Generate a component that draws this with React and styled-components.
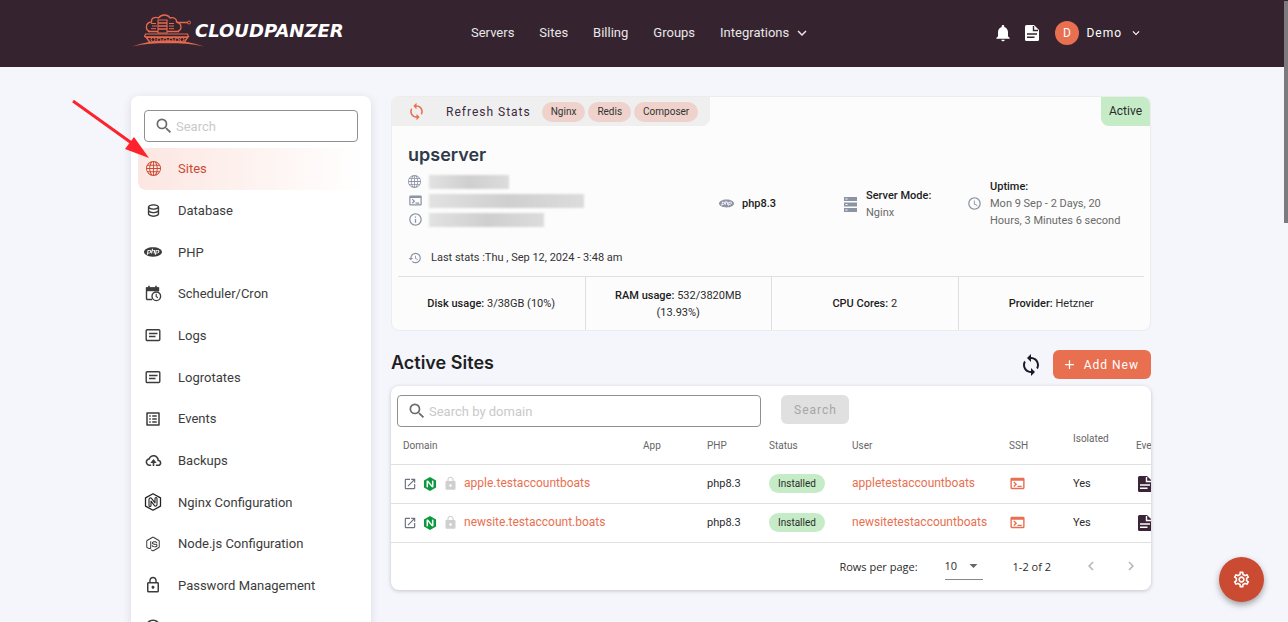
import React from 'react';
import styled, { createGlobalStyle } from 'styled-components';
import {
    MdAccessTime,
    MdAdd,
    MdArrowDropDown,
    MdChevronLeft,
    MdChevronRight,
    MdHistory,
    MdInfoOutline,
    MdKeyboardArrowDown,
    MdLock,
    MdLockOutline,
    MdNotifications,
    MdOpenInNew,
    MdOutlineListAlt,
    MdOutlineSettings,
    MdSearch,
    MdSync,
    MdTerminal,
} from 'react-icons/md';
import { BiCloudUpload, BiData } from 'react-icons/bi';
import { BsGlobe } from 'react-icons/bs';
import { LiaNodeJs } from 'react-icons/lia';
import { SiNginx, SiPhp } from 'react-icons/si';

const GlobalStyle = createGlobalStyle`
    * {
        box-sizing: border-box;
    }

    body {
        margin: 0;
        background-color: #f5f6fb;
        color: #2b2b2b;
        font-family: Roboto, "Liberation Sans", sans-serif;
        font-size: 11px;
        line-height: 17px;
    }

    button, input, select {
        font-family: inherit;
    }

    a {
        text-decoration: none;
    }

    svg {
        display: block;
        flex-shrink: 0;
    }
`;

/* Icons */

const DocumentIcon = ({ size = 18, fold = '#35242f' }) => (
    <svg width={size} height={size} viewBox="0 0 18 18" aria-hidden="true">
        <path d="M3.5 1h7.5L16 6v9.500a1.500 1.500 0 0 1-1.500 1.500h-11A1.500 1.500 0 0 1 2 15.500v-13A1.500 1.500 0 0 1 3.500 1z" fill="currentColor" />
        <path d="M10.500 2v4.500H15" fill="none" stroke={fold} strokeWidth="1.400" />
        <path d="M4 10h10M4 13.300h7.500" stroke={fold} strokeWidth="1.500" />
    </svg>
);

const CalendarClockIcon = () => (
    <svg width="17" height="17" viewBox="0 0 17 17" fill="none" stroke="currentColor" aria-hidden="true">
        <path d="M7 14.500H2.200a.7.7 0 0 1-.7-.7V3.200h12v3" strokeWidth="1.400" />
        <path d="M1 2.200h13v4H1z" fill="currentColor" stroke="none" />
        <path d="M4 .7v2M11 .7v2" strokeWidth="1.600" />
        <circle cx="11.300" cy="11.300" r="4.300" strokeWidth="1.400" />
        <path d="M11.200 8.800v2.700l1.700 1.300" strokeWidth="1.100" />
    </svg>
);

const ArticleIcon = () => (
    <svg width="16" height="16" viewBox="0 0 16 16" fill="none" stroke="currentColor" aria-hidden="true">
        <rect x="1.200" y="2.700" width="13.600" height="10.800" rx="1" strokeWidth="1.400" />
        <path d="M4 6.500h8.500M4 9.500h6.500" strokeWidth="1.300" />
    </svg>
);

const NginxOutlineIcon = () => (
    <svg width="18" height="18" viewBox="0 0 18 18" fill="none" stroke="#222" strokeLinejoin="round" aria-hidden="true">
        <path d="M9 .8l7.500 4.100v8.200L9 17.200l-7.500-4.100V4.900z" strokeWidth="1.300" />
        <path d="M5 12.500V6.200a1.400 1.400 0 0 1 2.500-.8l3.500 4.400V5.500a1 1 0 0 1 2 0v6.300a1.400 1.400 0 0 1-2.500.8L7 8.200v4.300a1 1 0 0 1-2 0z" strokeWidth="1.100" />
    </svg>
);

const ServerIcon = () => (
    <svg width="14" height="16" viewBox="0 0 14 16" aria-hidden="true">
        <path d="M0 1h13v4H0zM0 6.500h13v4H0zM0 12h13v4H0z" fill="#8c93a5" />
        <path d="M1.500 3h2M1.500 8.500h2M1.500 14h2" stroke="#fff" strokeWidth="1.200" />
    </svg>
);

const TankLogo = () => (
    <svg width="74" height="34" viewBox="0 0 74 34" fill="none" stroke="#e5694d" aria-hidden="true">
        <path d="M1 32.500Q37 20 73 32.500Q37 25 1 32.500z" fill="#e5694d" stroke="none" />
        <path d="M19 17.500c-5-1-5-9 1.500-9.500C20 4 24 2.500 27.500 4c3-4 9-4 11.500 0 4-1 7 1 6.500 4 5.500 1 6 8 1 9.500" strokeWidth="1.300" />
        <path d="M17 17.500h10M36 17.500h12" strokeWidth="1.300" />
        <path d="M27 6h9v13h-9z" strokeWidth="1.100" />
        <path d="M27 9h9M27 12h9M27 15h9" strokeWidth="1.300" />
        <path d="M20 9.500h5M21 12h5M20 14.700h5M38 9.500h5M38 12h5M38 14.700h5" strokeWidth="1" />
        <path d="M46 8.500h11" strokeWidth="1.500" />
        <circle cx="58" cy="8.500" r="1.500" strokeWidth="1" />
        <path d="M14.500 20h42l1 2.500-2 1h-40l-2-1z" strokeWidth="1.200" />
        <path d="M15 23l4 5.500h34l4-5.500z" strokeWidth="1.400" />
        <circle cx="22" cy="25.500" r="2" />
        <circle cx="28" cy="26" r="2" />
        <circle cx="34" cy="26" r="2" />
        <circle cx="40" cy="26" r="2" />
        <circle cx="46" cy="26" r="2" />
        <circle cx="51" cy="25.500" r="2" />
    </svg>
);

/* Header */

const Header = styled.header`
    display: flex;
    justify-content: center;
    height: 67px;
    padding: 0 6px 2px 0;
    background-color: #35242f;
    color: #fff;
`;

const HeaderInner = styled.div`
    display: grid;
    grid-template-columns: 340px 1fr auto;
    align-items: center;
    width: 100%;
    max-width: 1020px;
    padding-right: 8px;
`;

const Brand = styled.a`
    display: flex;
    align-items: center;
    padding-bottom: 4px;
    color: #fff;
    font-family: "DejaVu Sans", sans-serif;
    font-size: 18px;
    font-style: italic;
    font-weight: 700;
`;

const BrandName = styled.span`
    margin-left: -10px;
`;

const Nav = styled.nav`
    display: flex;
    align-items: center;
    gap: 25px;
`;

const NavLink = styled.a`
    display: flex;
    align-items: center;
    gap: 4px;
    color: #e9e6e8;
    font-size: 13px;
`;

const HeaderTools = styled.div`
    display: flex;
    align-items: center;
    gap: 10px;
`;

const ToolButton = styled.button`
    padding: 0;
    border: 0;
    background: none;
    color: #fff;
    cursor: pointer;
`;

const AccountButton = styled(ToolButton)`
    display: flex;
    align-items: center;
    gap: 7px;
    padding-left: 4px;
    font-size: 12px;
    letter-spacing: 1px;
`;

const Avatar = styled.span`
    width: 24px;
    height: 24px;
    border-radius: 50%;
    background-color: #e87051;
    line-height: 24px;
    text-align: center;
`;

/* Page */

const Page = styled.main`
    display: flex;
    justify-content: center;
    padding: 29px 6px 0 0;
`;

const PageInner = styled.div`
    display: flex;
    align-items: flex-start;
    gap: 20px;
    width: 100%;
    max-width: 1020px;
`;

const SidebarWrap = styled.div`
    position: relative;
    flex-shrink: 0;
`;

const Sidebar = styled.aside`
    width: 240px;
    padding: 14px 7px;
    border-radius: 8px;
    background-color: #fff;
    box-shadow: 0 2px 10px rgba(40, 40, 80, .12);
`;

const SearchBox = styled.label`
    display: flex;
    align-items: center;
    gap: 2px;
    height: 32px;
    padding: 0 9px;
    border: 1px solid #909090;
    border-radius: 4px;
    background-color: #fff;
    color: #6b6b6b;
`;

const SearchInput = styled.input`
    flex: 1;
    min-width: 0;
    padding: 0;
    border: 0;
    outline: 0;
    background: none;
    font-size: 13px;

    &::placeholder {
        color: #c9c9c9;
        opacity: 1;
    }
`;

const SidebarSearch = styled(SearchBox)`
    margin: 0 6px 6px;
`;

const Menu = styled.ul`
    display: grid;
    grid-auto-rows: 1fr;
    min-height: 500px;
    margin: 0;
    padding: 0;
    list-style: none;
`;

const MenuLink = styled.a`
    display: flex;
    align-items: center;
    gap: 16px;
    height: 100%;
    padding-left: 6px;
    border-radius: 8px;
    background: ${props => props.$active ? 'linear-gradient(90deg, #fce6e1, #fff)' : 'none'};
    color: ${props => props.$active ? '#cb4a32' : '#3c3c3c'};
    font-size: 13px;
`;

const MenuIcon = styled.span`
    display: flex;
    justify-content: center;
    width: 18px;
`;

const Content = styled.div`
    flex: 1;
    min-width: 0;
`;

/* Server card */

const ServerCard = styled.section`
    border: 1px solid #ececee;
    border-radius: 8px;
    background-color: #fcfcfc;
    overflow: hidden;
`;

const ServerTop = styled.div`
    display: flex;
    justify-content: space-between;
    height: 29px;
`;

const RefreshBar = styled.div`
    display: flex;
    align-items: center;
    gap: 3px;
    padding: 0 12px 0 15px;
    border-radius: 0 0 8px 0;
    background-color: #efefef;
`;

const RefreshButton = styled.button`
    display: flex;
    align-items: center;
    gap: 20px;
    margin-right: 8px;
    padding: 0;
    border: 0;
    background: none;
    color: #3c2a40;
    font-size: 12px;
    letter-spacing: 1px;

    svg {
        color: #e87051;
    }
`;

const Chip = styled.span`
    padding: 0 9px;
    border-radius: 10px;
    background-color: #efd2cb;
    color: #333;
    font-size: 10px;
    line-height: 20px;
`;

const ActiveTag = styled.span`
    padding: 0 8px;
    border-radius: 0 0 0 8px;
    background-color: #c5ecc6;
    font-size: 12px;
    line-height: 29px;
`;

const ServerBody = styled.div`
    display: grid;
    grid-template-columns: 311px 125px 123px 1fr;
    align-items: center;
    padding: 15px 16px 10px;
`;

const ServerName = styled.h1`
    margin: 0 0 3px;
    color: #2f3a4a;
    font-family: Inter, sans-serif;
    font-size: 18px;
    font-weight: 600;
    line-height: 28px;
`;

const InfoLine = styled.div`
    display: grid;
    grid-template-columns: 14px auto;
    column-gap: 7px;
    align-items: center;
    justify-content: start;
    height: 19px;
    color: #8c93a5;
`;

const Redacted = styled.span`
    width: ${props => props.$width}px;
    height: 14px;
    background: linear-gradient(90deg, #e2e2e3, #cfcfd0 50%, #dcdcdd);
    filter: blur(1px);
`;

const Fact = styled.div`
    display: flex;
    align-items: center;
    gap: 8px;
    color: #8c93a5;

    p {
        margin: 0;
        color: #6a6a6a;
    }

    strong {
        display: block;
        color: #1c1c1c;
        font-weight: 500;
    }
`;

const LastStats = styled.div`
    display: flex;
    align-items: center;
    gap: 9px;
    margin-top: 20px;
    color: #333;

    svg {
        color: #8c93a5;
    }
`;

const Usage = styled.dl`
    display: grid;
    grid-template-columns: repeat(4, 1fr);
    height: 54px;
    margin: 0 6px;
    border-top: 1px solid #dfdfe1;
`;

const UsageCell = styled.div`
    display: flex;
    align-items: center;
    justify-content: center;
    padding: 0 16px;
    text-align: center;

    & + & {
        border-left: 1px solid #dfdfe1;
    }

    dt, dd {
        display: inline;
        margin: 0;
    }

    dt {
        color: #1c1c1c;
        font-weight: 500;
    }
`;

/* Sites */

const SitesHeader = styled.div`
    display: flex;
    align-items: center;
    gap: 10px;
    margin: 19px 0 7px;
`;

const SitesTitle = styled.h2`
    flex: 1;
    margin: 0;
    padding-bottom: 3px;
    color: #1f1f1f;
    font-family: Inter, sans-serif;
    font-size: 18px;
    font-weight: 600;
    line-height: 26px;
`;

const IconButton = styled.button`
    display: block;
    padding: 0;
    border: 0;
    background: none;
    color: ${props => props.$color};
`;

const Button = styled.button`
    display: flex;
    align-items: center;
    gap: 7px;
    height: 29px;
    padding: 0 12px 0 9px;
    border: 0;
    border-radius: 6px;
    background-color: #e87051;
    color: #fff;
    font-size: 12px;
    letter-spacing: 1px;

    &:disabled {
        padding: 0 12px 0 13px;
        background-color: #e0e0e0;
        color: #a6a6a6;
    }
`;

const SitesCard = styled.section`
    border-radius: 8px;
    background-color: #fff;
    box-shadow: 0 1px 4px rgba(0, 0, 0, .2);
    overflow: hidden;
`;

const Filter = styled.form`
    display: flex;
    gap: 20px;
    padding: 9px 6px 0;

    label {
        width: 364px;
    }
`;

const Table = styled.table`
    width: 833px;
    table-layout: fixed;
    border-collapse: collapse;
`;

const Th = styled.th`
    height: 37px;
    padding: ${props => props.$raised ? '0 0 14px 12px' : '0 0 0 12px'};
    border-bottom: 1px solid #e0e0e0;
    color: #666;
    font-size: 10px;
    font-weight: 400;
    text-align: left;
`;

const Td = styled.td`
    height: 39px;
    padding: 0 0 0 12px;
    border-bottom: 1px solid #e0e0e0;
    white-space: nowrap;
`;

const Domain = styled.div`
    display: flex;
    align-items: center;
    gap: 6px;
    color: #6b7280;
`;

const SiteLink = styled.a`
    color: #e87051;
    font-size: 12px;
`;

const Status = styled.span`
    display: inline-block;
    padding: 0 9px;
    border-radius: 10px;
    background-color: #c5ecc6;
    font-size: 10px;
    line-height: 19px;
`;

const Pager = styled.div`
    display: flex;
    align-items: center;
    justify-content: flex-end;
    height: 47px;
    padding-right: 11px;
    font-family: "Open Sans", sans-serif;
`;

const PageSize = styled.label`
    display: flex;
    align-items: center;
    gap: 27px;
    margin-right: 30px;
`;

const SelectWrap = styled.span`
    display: flex;
    align-items: center;
    width: 38px;
    height: 27px;
    border-bottom: 1px solid #888;
    color: #666;
`;

const Select = styled.select`
    width: 19px;
    padding: 0;
    border: 0;
    outline: 0;
    appearance: none;
    background: none;
    color: #2b2b2b;
    font-size: 11px;
`;

const PagerButtons = styled.div`
    display: flex;
    gap: 22px;
    margin-left: 31px;
`;

/* Overlays */

const SettingsButton = styled.button`
    position: fixed;
    right: 24px;
    bottom: 20px;
    display: flex;
    align-items: center;
    justify-content: center;
    width: 45px;
    height: 45px;
    padding: 0;
    border: 0;
    border-radius: 50%;
    background-color: #cb4a32;
    color: #fff;
    box-shadow: 0 3px 6px rgba(0, 0, 0, .35);
`;

const ScrollThumb = styled.div`
    position: fixed;
    top: 1px;
    right: 0;
    width: 4px;
    height: 222px;
    background-color: #7d7a7d;
`;

const Pointer = styled.svg`
    position: absolute;
    top: 4px;
    left: -60px;
`;

const menu = [
    { label: 'Sites', icon: <BsGlobe size={15} />, active: true },
    { label: 'Database', icon: <BiData size={17} /> },
    { label: 'PHP', icon: <SiPhp size={18} /> },
    { label: 'Scheduler/Cron', icon: <CalendarClockIcon /> },
    { label: 'Logs', icon: <ArticleIcon /> },
    { label: 'Logrotates', icon: <ArticleIcon /> },
    { label: 'Events', icon: <MdOutlineListAlt size={18} /> },
    { label: 'Backups', icon: <BiCloudUpload size={19} /> },
    { label: 'Nginx Configuration', icon: <NginxOutlineIcon /> },
    { label: 'Node.js Configuration', icon: <LiaNodeJs size={18} /> },
    { label: 'Password Management', icon: <MdLockOutline size={18} /> },
    { label: 'Server Safety', icon: <MdInfoOutline size={18} /> },
];

const usage = [
    ['Disk usage:', '3/38GB (10%)'],
    ['RAM usage:', '532/3820MB (13.93%)'],
    ['CPU Cores:', '2'],
    ['Provider:', 'Hetzner'],
];

const columns = [
    ['Domain', 240],
    ['App', 64],
    ['PHP', 62],
    ['Status', 83],
    ['User', 157],
    ['SSH', 64],
    ['Isolated', 63],
    ['Events', 100],
];

const sites = [
    { domain: 'apple.testaccountboats', user: 'appletestaccountboats' },
    { domain: 'newsite.testaccount.boats', user: 'newsitetestaccountboats' },
];

const TopBar = () => (
    <Header>
        <HeaderInner>
            <Brand href="#">
                <TankLogo />
                <BrandName>CLOUDPANZER</BrandName>
            </Brand>
            <Nav>
                <NavLink href="#">Servers</NavLink>
                <NavLink href="#">Sites</NavLink>
                <NavLink href="#">Billing</NavLink>
                <NavLink href="#">Groups</NavLink>
                <NavLink href="#">Integrations <MdKeyboardArrowDown size={18} /></NavLink>
            </Nav>
            <HeaderTools>
                <ToolButton aria-label="Notifications"><MdNotifications size={20} /></ToolButton>
                <ToolButton aria-label="Documents"><DocumentIcon /></ToolButton>
                <AccountButton>
                    <Avatar>D</Avatar>
                    Demo
                    <MdKeyboardArrowDown size={14} />
                </AccountButton>
            </HeaderTools>
        </HeaderInner>
    </Header>
);

const SideMenu = () => (
    <SidebarWrap>
        <Sidebar>
            <SidebarSearch>
                <MdSearch size={20} />
                <SearchInput placeholder="Search" aria-label="Search menu" />
            </SidebarSearch>
            <Menu>
                {menu.map(item => (
                    <li key={item.label}>
                        <MenuLink href="#" $active={item.active}>
                            <MenuIcon>{item.icon}</MenuIcon>
                            {item.label}
                        </MenuLink>
                    </li>
                ))}
            </Menu>
        </Sidebar>
        <Pointer width="80" height="60" viewBox="0 0 80 60" aria-hidden="true">
            <path d="M2 1L62 44" stroke="#fd222b" strokeWidth="3" />
            <path d="M78 58L54 49L63 37z" fill="#fd222b" />
        </Pointer>
    </SidebarWrap>
);

const ServerSummary = () => (
    <ServerCard>
        <ServerTop>
            <RefreshBar>
                <RefreshButton><MdSync size={19} />Refresh Stats</RefreshButton>
                <Chip>Nginx</Chip>
                <Chip>Redis</Chip>
                <Chip>Composer</Chip>
            </RefreshBar>
            <ActiveTag>Active</ActiveTag>
        </ServerTop>
        <ServerBody>
            <div>
                <ServerName>upserver</ServerName>
                <InfoLine><BsGlobe size={13} /><Redacted $width={80} /></InfoLine>
                <InfoLine><MdTerminal size={15} /><Redacted $width={155} /></InfoLine>
                <InfoLine><MdInfoOutline size={15} /><Redacted $width={115} /></InfoLine>
                <LastStats><MdHistory size={14} />Last stats :Thu , Sep 12, 2024 - 3:48 am</LastStats>
            </div>
            <Fact>
                <SiPhp size={15} />
                <p><strong>php8.3</strong></p>
            </Fact>
            <Fact>
                <ServerIcon />
                <p><strong>Server Mode:</strong>Nginx</p>
            </Fact>
            <Fact>
                <MdAccessTime size={15} />
                <p><strong>Uptime:</strong>Mon 9 Sep - 2 Days, 20 Hours, 3 Minutes 6 second</p>
            </Fact>
        </ServerBody>
        <Usage>
            {usage.map(([name, value]) => (
                <UsageCell key={name}>
                    <div><dt>{name}</dt> <dd>{value}</dd></div>
                </UsageCell>
            ))}
        </Usage>
    </ServerCard>
);

const SitesTable = () => (
    <Table>
        <colgroup>
            {columns.map(([name, width]) => <col key={name} width={width} />)}
        </colgroup>
        <thead>
            <tr>
                {columns.map(([name]) => <Th key={name} $raised={name === 'Isolated'}>{name}</Th>)}
            </tr>
        </thead>
        <tbody>
            {sites.map(site => (
                <tr key={site.domain}>
                    <Td>
                        <Domain>
                            <MdOpenInNew size={14} />
                            <SiNginx size={14} color="#0a9a3c" />
                            <MdLock size={15} color="#cfcfcf" />
                            <SiteLink href="#">{site.domain}</SiteLink>
                        </Domain>
                    </Td>
                    <Td />
                    <Td>php8.3</Td>
                    <Td><Status>Installed</Status></Td>
                    <Td><SiteLink href="#">{site.user}</SiteLink></Td>
                    <Td><IconButton $color="#e87051" aria-label="Open terminal"><MdTerminal size={17} /></IconButton></Td>
                    <Td>Yes</Td>
                    <Td><IconButton $color="#3c2438" aria-label="Show events"><DocumentIcon fold="#fff" /></IconButton></Td>
                </tr>
            ))}
        </tbody>
    </Table>
);

const App = () => (
    <>
        <GlobalStyle />
        <TopBar />
        <Page>
            <PageInner>
                <SideMenu />
                <Content>
                    <ServerSummary />
                    <SitesHeader>
                        <SitesTitle>Active Sites</SitesTitle>
                        <IconButton $color="#1b1b2b" aria-label="Reload sites"><MdSync size={24} /></IconButton>
                        <Button><MdAdd size={15} />Add New</Button>
                    </SitesHeader>
                    <SitesCard>
                        <Filter>
                            <SearchBox>
                                <MdSearch size={20} />
                                <SearchInput placeholder="Search by domain" aria-label="Search by domain" />
                            </SearchBox>
                            <Button disabled>Search</Button>
                        </Filter>
                        <SitesTable />
                        <Pager>
                            <PageSize>
                                Rows per page:
                                <SelectWrap>
                                    <Select defaultValue="10">
                                        <option>10</option>
                                        <option>25</option>
                                    </Select>
                                    <MdArrowDropDown size={19} />
                                </SelectWrap>
                            </PageSize>
                            1-2 of 2
                            <PagerButtons>
                                <IconButton $color="#b5b5b5" aria-label="Previous page"><MdChevronLeft size={18} /></IconButton>
                                <IconButton $color="#b5b5b5" aria-label="Next page"><MdChevronRight size={18} /></IconButton>
                            </PagerButtons>
                        </Pager>
                    </SitesCard>
                </Content>
            </PageInner>
        </Page>
        <SettingsButton aria-label="Settings"><MdOutlineSettings size={19} /></SettingsButton>
        <ScrollThumb />
    </>
);

export default App;
